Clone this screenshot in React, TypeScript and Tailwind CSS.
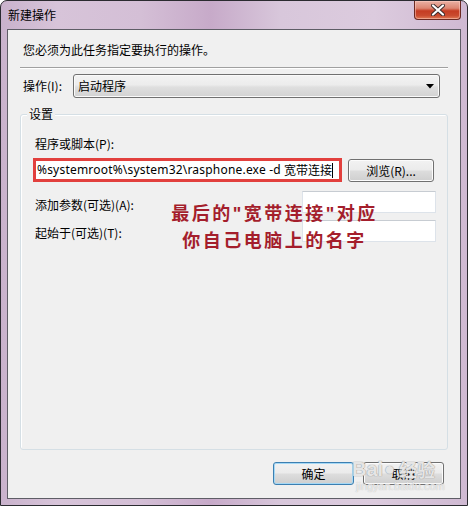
import React from "react";

const cjk = { fontFamily: '"Noto Sans CJK SC", "Noto Sans", sans-serif' };
const latin = { fontFamily: '"Noto Sans", "Noto Sans CJK SC", sans-serif' };
const quoteFont = { fontFamily: '"Liberation Sans", sans-serif' };

function CloseButton() {
  return (
    <div className="w-[47px] h-[19px] rounded-b-[4px] border border-t-0 border-[#6b2a22] bg-[linear-gradient(180deg,#eab1a4_0%,#dc8672_40%,#c53c22_55%,#c94a2e_80%,#e07a55_100%)] flex items-center justify-center shadow-[inset_0_0_0_1px_rgba(255,210,200,0.5)]">
      <svg width="14" height="12" viewBox="0 0 14 12">
        <path d="M2 1.5 L12 10.5 M12 1.5 L2 10.5" stroke="#3a2a2a" strokeWidth="4" strokeLinecap="round" />
        <path d="M2 1.5 L12 10.5 M12 1.5 L2 10.5" stroke="#ffffff" strokeWidth="2.2" strokeLinecap="round" />
      </svg>
    </div>
  );
}

function GrayButton({ children, focused = false, className = "" }: { children: React.ReactNode; focused?: boolean; className?: string }) {
  return (
    <div
      className={`h-[23px] rounded-[3px] border ${focused ? "border-[#3c7fb1] shadow-[inset_0_0_0_1px_#a5d8f5]" : "border-[#707070] shadow-[inset_0_0_0_1px_#fcfcfc]"} bg-[linear-gradient(180deg,#f2f2f2_0%,#ebebeb_48%,#dddddd_52%,#cfcfcf_100%)] flex items-center justify-center text-[12px] text-black leading-none ${className}`}
    >
      {children}
    </div>
  );
}

export default function App() {
  return (
    <div className="w-[468px] h-[506px] bg-white overflow-hidden" style={cjk}>
      <div className="w-[468px] h-[506px] flex flex-col border border-[#2b2b30] rounded-t-[7px] bg-[linear-gradient(90deg,#c9b2cc_0%,#d7c4d9_12%,#d4bfd6_30%,#c7aac9_45%,#d8c7db_60%,#dccbde_80%,#cfb9d2_100%)] px-[6px] pb-[6px]">
        {/* Title bar */}
        <div className="h-[28px] flex items-start justify-between">
          <div className="pl-[1px] pt-[6px] text-[12px] leading-[16px] text-black">新建操作</div>
          <CloseButton />
        </div>

        {/* Client area */}
        <div className="flex-1 border border-[#5e5d66] bg-[#f0f0f0] flex flex-col px-[12px] relative text-[12px] text-black">
          <div className="pl-[3px] mt-[12px] h-[16px] leading-[16px]">您必须为此任务指定要执行的操作。</div>

          <div className="mt-[9px] h-px bg-[#a0a0a0]" />
          <div className="h-px bg-white" />

          <div className="mt-[5px] flex items-center">
            <div className="pl-[3px] w-[53px] leading-[16px]">操作(I):</div>
            <div className="w-[367px] h-[24px] rounded-[3px] border border-[#707070] bg-[linear-gradient(180deg,#f3f3f3_0%,#ececec_45%,#dfdfdf_55%,#d2d2d2_100%)] shadow-[inset_0_0_0_1px_#fafafa] flex items-center justify-between pl-[4px] pr-[5px]">
              <span className="leading-[16px]">启动程序</span>
              <svg width="8" height="5" viewBox="0 0 8 5">
                <path d="M0 0 H8 L4 4.5 Z" fill="#000" />
              </svg>
            </div>
          </div>

          {/* Group box */}
          <div className="mt-[16px] flex-1 relative border border-[#d5dfe5] rounded-[3px] pl-[14px] pr-[11px] shadow-[inset_1px_1px_0_#ffffff]">
            <div className="absolute left-[6px] top-[-9px] px-[2px] leading-[16px] bg-[#f0f0f0]">设置</div>

            <div className="mt-[21px] leading-[16px]">程序或脚本(P):</div>

            <div className="mt-[6px] flex items-start justify-between">
              <div className="ml-[-2px] w-[309px] h-[24px] border-[3px] border-[#e2403d] bg-white flex items-center pl-[1px] overflow-hidden whitespace-nowrap">
                <span className="text-[12px] text-black leading-[16px] tracking-[0.2px]" style={latin}>
                  %systemroot%\system32\rasphone.exe -d{" "}
                </span>
                <span className="text-[12px] text-black leading-[16px] ml-[3px]" style={cjk}>
                  宽带连接
                </span>
                <span className="inline-block w-px h-[15px] bg-black" />
              </div>
              <GrayButton className="mt-[1px] w-[86px] mr-[2px]">浏览(R)...</GrayButton>
            </div>

            <div className="mt-[9px] relative flex items-start justify-between">
              <div className="mt-[6px] leading-[16px]">添加参数(可选)(A):</div>
              <div className="w-[134px] h-[22px] bg-white border border-[#dde3ea] border-t-[#c7ccd2]" />

              {/* Annotation overlay */}
              <div className="absolute left-[117px] top-[-1px] translate-y-[10px] w-[245px] flex flex-col items-center text-[18px] leading-[25px] font-bold text-[#a41e2c]">
                <span className="tracking-[2.5px] whitespace-nowrap">
                  最后的<span style={quoteFont}>"</span>宽带连接<span style={quoteFont}>"</span>对应
                </span>
                <span className="tracking-[2.5px] whitespace-nowrap">你自己电脑上的名字</span>
              </div>
            </div>

            <div className="mt-[7px] flex items-start justify-between">
              <div className="mt-[5px] leading-[16px]">起始于(可选)(T):</div>
              <div className="w-[134px] h-[22px] bg-white border border-[#dde3ea] border-t-[#c7ccd2]" />
            </div>
          </div>

          <div className="mt-[12px] mb-[13px] flex justify-end gap-[9px] mr-[4px]">
            <GrayButton focused className="w-[81px]">确定</GrayButton>
            <GrayButton className="w-[81px]">取消</GrayButton>
          </div>

          {/* Baidu watermark */}
          <div className="absolute left-[344px] top-[428px] flex flex-col items-start">
            <div
              className="flex items-end text-[20px] leading-[22px] font-bold text-[rgba(255,255,255,0.75)]"
              style={{ fontFamily: '"Liberation Sans", sans-serif', textShadow: "0 0 1px #9a9a9a, 0 0 1px #9a9a9a" }}
            >
              <span>Bai</span>
              <span className="text-[18px] ml-[1px]">●</span>
              <span className="ml-[4px] text-[18px]" style={cjk}>经验</span>
            </div>
            <div
              className="ml-[4px] text-[11px] leading-[12px] text-[rgba(255,255,255,0.7)]"
              style={{ fontFamily: '"Liberation Sans", sans-serif', textShadow: "0 0 1px #aaaaaa" }}
            >
              jingyan.baidu.com
            </div>
          </div>
        </div>
      </div>
    </div>
  );
}
